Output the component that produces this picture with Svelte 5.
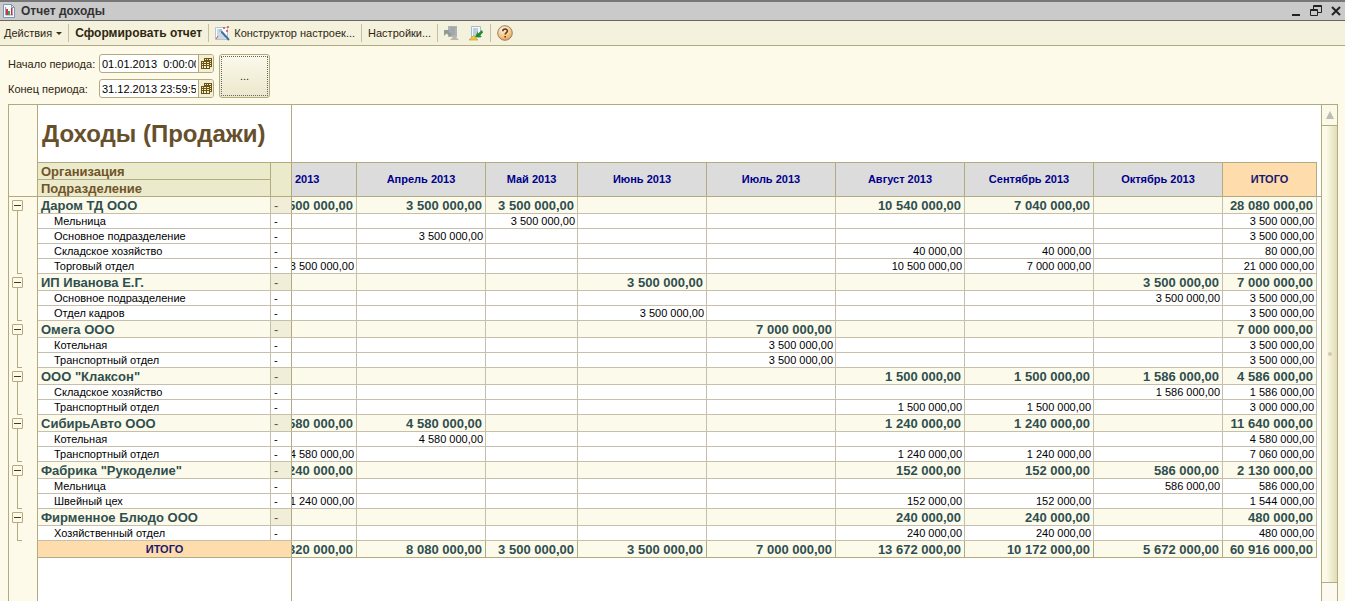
<script lang="ts">
    type Row = {
        name: string;
        values: Record<number, string>;
        total: string;
    };

    type Group = Row & { items: Row[] };

    const months = ['Март 2013', 'Апрель 2013', 'Май 2013', 'Июнь 2013', 'Июль 2013', 'Август 2013', 'Сентябрь 2013', 'Октябрь 2013'];

    const groups: Group[] = [
        {
            name: 'Даром ТД ООО',
            values: { 0: '3 500 000,00', 1: '3 500 000,00', 2: '3 500 000,00', 5: '10 540 000,00', 6: '7 040 000,00' },
            total: '28 080 000,00',
            items: [
                { name: 'Мельница', values: { 2: '3 500 000,00' }, total: '3 500 000,00' },
                { name: 'Основное подразделение', values: { 1: '3 500 000,00' }, total: '3 500 000,00' },
                { name: 'Складское хозяйство', values: { 5: '40 000,00', 6: '40 000,00' }, total: '80 000,00' },
                { name: 'Торговый отдел', values: { 0: '3 500 000,00', 5: '10 500 000,00', 6: '7 000 000,00' }, total: '21 000 000,00' }
            ]
        },
        {
            name: 'ИП Иванова Е.Г.',
            values: { 3: '3 500 000,00', 7: '3 500 000,00' },
            total: '7 000 000,00',
            items: [
                { name: 'Основное подразделение', values: { 7: '3 500 000,00' }, total: '3 500 000,00' },
                { name: 'Отдел кадров', values: { 3: '3 500 000,00' }, total: '3 500 000,00' }
            ]
        },
        {
            name: 'Омега ООО',
            values: { 4: '7 000 000,00' },
            total: '7 000 000,00',
            items: [
                { name: 'Котельная', values: { 4: '3 500 000,00' }, total: '3 500 000,00' },
                { name: 'Транспортный отдел', values: { 4: '3 500 000,00' }, total: '3 500 000,00' }
            ]
        },
        {
            name: 'ООО "Клаксон"',
            values: { 5: '1 500 000,00', 6: '1 500 000,00', 7: '1 586 000,00' },
            total: '4 586 000,00',
            items: [
                { name: 'Складское хозяйство', values: { 7: '1 586 000,00' }, total: '1 586 000,00' },
                { name: 'Транспортный отдел', values: { 5: '1 500 000,00', 6: '1 500 000,00' }, total: '3 000 000,00' }
            ]
        },
        {
            name: 'СибирьАвто ООО',
            values: { 0: '4 580 000,00', 1: '4 580 000,00', 5: '1 240 000,00', 6: '1 240 000,00' },
            total: '11 640 000,00',
            items: [
                { name: 'Котельная', values: { 1: '4 580 000,00' }, total: '4 580 000,00' },
                { name: 'Транспортный отдел', values: { 0: '4 580 000,00', 5: '1 240 000,00', 6: '1 240 000,00' }, total: '7 060 000,00' }
            ]
        },
        {
            name: 'Фабрика "Рукоделие"',
            values: { 0: '1 240 000,00', 5: '152 000,00', 6: '152 000,00', 7: '586 000,00' },
            total: '2 130 000,00',
            items: [
                { name: 'Мельница', values: { 7: '586 000,00' }, total: '586 000,00' },
                { name: 'Швейный цех', values: { 0: '1 240 000,00', 5: '152 000,00', 6: '152 000,00' }, total: '1 544 000,00' }
            ]
        },
        {
            name: 'Фирменное Блюдо ООО',
            values: { 5: '240 000,00', 6: '240 000,00' },
            total: '480 000,00',
            items: [
                { name: 'Хозяйственный отдел', values: { 5: '240 000,00', 6: '240 000,00' }, total: '480 000,00' }
            ]
        }
    ];

    const totals = ['9 320 000,00', '8 080 000,00', '3 500 000,00', '3 500 000,00', '7 000 000,00', '13 672 000,00', '10 172 000,00', '5 672 000,00'];

    let dateFrom = $state('01.01.2013  0:00:00');
    let dateTo = $state('31.12.2013 23:59:59');
    let closed: Record<string, boolean> = $state({});
</script>

{#snippet calendarIcon()}
    <svg width="11" height="12" viewBox="0 0 11 12" aria-hidden="true">
        <path d="M3 0h8v9H9v2H0V3h3z" fill="#6b5310" />
        <path d="M4 1h1v1H4zM6 1h1v1H6zM8 1h2v1H8zM1 4h1v1H1zM3 4h2v1H3zM6 4h2v1H6zM9 3h1v1H9zM1 6h1v1H1zM3 6h2v1H3zM6 6h2v1H6zM9 5h1v1H9zM1 8h1v2H1zM3 8h2v2H3zM6 8h2v2H6zM9 7h1v1H9z" fill="#f3efd5" />
    </svg>
{/snippet}

{#snippet cells(row: Row)}
    {#each months as _, i}
        <td class="num"><div><span>{row.values[i] ?? ''}</span></div></td>
    {/each}
    <td class="num"><div><span>{row.total}</span></div></td>
    <td class="rest"></td>
{/snippet}

<div class="window">
    <header class="titlebar">
        <svg width="12" height="14" viewBox="0 0 12 14" aria-hidden="true">
            <path d="M.5.5h8l3 3v10H.5z" fill="#f4f8fc" stroke="#7e98b4" />
            <path d="M8.5.5v3h3" fill="none" stroke="#7e98b4" />
            <path d="M2.5 3v8H10" fill="none" stroke="#8ea6bf" />
            <path d="M3 5h2v6H3z" fill="#d2363a" />
            <path d="M5 7h2v4H5z" fill="#3fa05a" />
            <path d="M8 4h1.500v7H8z" fill="#b63440" />
        </svg>
        <h1>Отчет доходы</h1>
        <div class="controls">
            <button aria-label="Свернуть">
                <svg width="10" height="12" viewBox="0 0 10 12"><path d="M1 9h8v2H1z" fill="#222" /></svg>
            </button>
            <button aria-label="Восстановить">
                <svg width="12" height="12" viewBox="0 0 12 12">
                    <path d="M3.500 4V.5h8v7H8M3 1.500h9M.5 4.500h7v6h-7zM0 5.500h8" fill="none" stroke="#222" />
                </svg>
            </button>
            <button aria-label="Закрыть">
                <svg width="10" height="12" viewBox="0 0 10 12"><path d="M1 2l8 8M9 2l-8 8" stroke="#222" stroke-width="2" /></svg>
            </button>
        </div>
    </header>

    <nav class="toolbar">
        <button>Действия <i class="caret"></i></button>
        <i class="sep"></i>
        <button class="primary">Сформировать отчет</button>
        <i class="sep"></i>
        <button>
            <svg width="15" height="15" viewBox="0 0 15 15" aria-hidden="true">
                <path d="M.5 1.500h12v12H.5z" fill="#fbfcfd" stroke="#b9c3ce" />
                <path d="M2 4h5M2 6h3M2 8h6M2 10h8M2 12h8" stroke="#9cb4c9" />
                <path d="M5 4l9 10" stroke="#416f9c" stroke-width="2" />
                <path d="M4.500 3.500l2 2" stroke="#8ecbe2" stroke-width="2" />
                <path d="M8 2h2M9 1v2M12 1h2M13 0v2M11 5h2M12 4v2M3 10l-2 3" stroke="#dc4747" />
            </svg>
            Конструктор настроек...
        </button>
        <i class="sep"></i>
        <button>Настройки...</button>
        <i class="sep"></i>
        <div class="icons">
            <button aria-label="Восстановить настройки">
                <svg width="16" height="15" viewBox="0 0 16 15">
                    <path d="M4 0h9v11H4z" fill="#adb2b5" />
                    <path d="M6 2h5M6 4h5M6 6h5M6 8h5" stroke="#989fa3" />
                    <path d="M0 4h6L4.500 5.500 8 8.500 6 10.500 2.500 7.500 0 10z" fill="#8f9c91" />
                    <path d="M6 14l4.500-4.500L15 14z" fill="#b9b7af" />
                </svg>
            </button>
            <button aria-label="Сохранить настройки">
                <svg width="16" height="15" viewBox="0 0 16 15">
                    <path d="M3.500.5h9v11h-9z" fill="#f3f8fc" stroke="#a8bccd" />
                    <path d="M5 3h5M5 5h5M5 7h4M5 9h3" stroke="#88a5bf" />
                    <path d="M14 4l-4 3.500V5L7 11h7l-2-1.500 3-3z" fill="#278a2b" />
                    <path d="M1 14l4.500-4.500L10 14z" fill="#f0c63d" stroke="#c39625" stroke-width=".6" />
                </svg>
            </button>
        </div>
        <i class="sep"></i>
        <button aria-label="Справка">
            <svg width="16" height="16" viewBox="0 0 16 16">
                <defs>
                    <radialGradient id="help" cx=".4" cy=".25" r=".8">
                        <stop offset="0" stop-color="#fff3dc" />
                        <stop offset=".6" stop-color="#f8c98a" />
                        <stop offset="1" stop-color="#e79a48" />
                    </radialGradient>
                </defs>
                <circle cx="8" cy="8" r="7.300" fill="url(#help)" stroke="#9a8064" />
                <path d="M5.800 6.300c0-3 4.600-2.900 4.600-.3 0 1.500-2.200 1.600-2.200 3.500M8.200 11v1.600" fill="none" stroke="#5d3c20" stroke-width="1.600" />
            </svg>
        </button>
    </nav>

    <form class="period" onsubmit={(e) => e.preventDefault()}>
        <div class="fields">
            <label for="from">Начало периода:</label>
            <div class="date">
                <input id="from" type="text" bind:value={dateFrom} />
                <button type="button" aria-label="Выбрать начало периода">{@render calendarIcon()}</button>
            </div>
            <label for="to">Конец периода:</label>
            <div class="date">
                <input id="to" type="text" bind:value={dateTo} />
                <button type="button" aria-label="Выбрать конец периода">{@render calendarIcon()}</button>
            </div>
        </div>
        <button type="button" class="pick"><span>...</span></button>
    </form>

    <main class="report">
        <div class="sheet">
            <table>
                <colgroup>
                    <col class="w-gutter" />
                    <col class="w-name" />
                    <col class="w-dash" />
                    <col class="w-cut" />
                    <col class="w-month" />
                    <col class="w-short" />
                    <col class="w-month" />
                    <col class="w-month" />
                    <col class="w-month" />
                    <col class="w-month" />
                    <col class="w-month" />
                    <col class="w-total" />
                    <col />
                </colgroup>
                <thead>
                    <tr class="caption">
                        <td class="gutter" rowspan="3"></td>
                        <th colspan="2">Доходы (Продажи)</th>
                        <td colspan="9" class="blank"></td>
                        <td class="rest" rowspan="3"></td>
                    </tr>
                    <tr class="head">
                        <th class="dim">Организация</th>
                        <th class="dim" rowspan="2"></th>
                        {#each months as month}
                            <th class="month" rowspan="2"><div><span>{month}</span></div></th>
                        {/each}
                        <th class="month sum" rowspan="2">ИТОГО</th>
                    </tr>
                    <tr class="head">
                        <th class="dim">Подразделение</th>
                    </tr>
                </thead>
                <tbody>
                    {#each groups as group}
                        <tr class="group">
                            <td class="gutter">
                                <button
                                    class="toggle"
                                    aria-label={group.name}
                                    aria-expanded={!closed[group.name]}
                                    onclick={() => (closed[group.name] = !closed[group.name])}
                                ></button>
                            </td>
                            <th class="name">{group.name}</th>
                            <td class="dash">-</td>
                            {@render cells(group)}
                        </tr>
                        {#if !closed[group.name]}
                            {#each group.items as item}
                                <tr class="item">
                                    <td class="gutter"></td>
                                    <th class="name">{item.name}</th>
                                    <td class="dash">-</td>
                                    {@render cells(item)}
                                </tr>
                            {/each}
                        {/if}
                    {/each}
                    <tr class="group total">
                        <td class="gutter"></td>
                        <th class="sum" colspan="2">ИТОГО</th>
                        {#each totals as value}
                            <td class="num"><div><span>{value}</span></div></td>
                        {/each}
                        <td class="num"><div><span>60 916 000,00</span></div></td>
                        <td class="rest"></td>
                    </tr>
                    <tr class="filler">
                        <td class="gutter"></td>
                        <td colspan="2"></td>
                        <td colspan="10" class="rest"></td>
                    </tr>
                </tbody>
            </table>
        </div>
        <div class="scrollbar">
            <button aria-label="Вверх">
                <svg width="8" height="8" viewBox="0 0 8 8"><path d="M4 0l4 8H0z" fill="#bdbdb0" /></svg>
            </button>
            <div class="thumb"><i></i></div>
        </div>
    </main>
</div>

<style>
    :global(body) {
        margin: 0;
        background: #fdfaea;
    }

    .window {
        --line: #b3ab80;
        --thin: #c6bfab;
        display: flex;
        flex-direction: column;
        height: 100vh;
        overflow: hidden;
        color: #2f2710;
        font: 11px/14px "Liberation Sans", Arial, sans-serif;
    }

    button {
        display: flex;
        align-items: center;
        padding: 0;
        border: 0;
        background: none;
        color: inherit;
        font: inherit;
    }

    svg {
        flex: none;
    }

    .titlebar {
        display: flex;
        align-items: center;
        gap: 6px;
        flex: none;
        box-sizing: border-box;
        height: 21px;
        padding: 0 4px 0 3px;
        border-top: 2px solid #777;
        border-bottom: 1px solid #666;
        background: #cacaca;
    }

    h1 {
        flex: 1;
        margin: 0;
        font-size: 12px;
        color: #333;
    }

    .controls {
        display: flex;
        gap: 9px;
    }

    .toolbar {
        display: flex;
        align-items: center;
        gap: 6px;
        flex: none;
        box-sizing: border-box;
        height: 25px;
        padding: 0 4px;
        border-bottom: 1px solid var(--line);
        background: #f4f1dc;
    }

    .toolbar button {
        gap: 4px;
        white-space: nowrap;
    }

    .icons {
        display: flex;
        gap: 8px;
    }

    .toolbar .primary {
        font-size: 12px;
        font-weight: bold;
    }

    .caret {
        border: 3px solid transparent;
        border-top-color: #3c3010;
        border-bottom: 0;
    }

    .sep {
        width: 1px;
        height: 18px;
        background: #c5c0a4;
    }

    .period {
        display: flex;
        gap: 5px;
        flex: none;
        padding: 8px 8px 6px;
    }

    .fields {
        display: grid;
        grid-template-columns: 86px 115px;
        gap: 6px 5px;
        align-items: center;
    }

    label {
        white-space: nowrap;
    }

    .date {
        display: flex;
        box-sizing: border-box;
        height: 19px;
        border: 1px solid var(--line);
        border-radius: 3px;
        overflow: hidden;
        background: #fff;
    }

    .date input {
        flex: 1;
        min-width: 0;
        margin-right: 2px;
        padding: 0 0 0 2px;
        border: 0;
        outline: 0;
        background: none;
        color: #000;
        font: 11px "Liberation Sans", Arial, sans-serif;
    }

    .date button {
        justify-content: center;
        width: 15px;
        border-left: 1px solid var(--line);
        background: #f3efd5;
    }

    .pick {
        box-sizing: border-box;
        width: 51px;
        height: 44px;
        padding: 1px;
        border: 1px solid var(--line);
        border-radius: 3px;
        background: linear-gradient(#fbf9ea, #ebe8cd);
    }

    .pick span {
        display: grid;
        place-items: center;
        flex: 1;
        align-self: stretch;
        border: 1px dotted #666;
    }

    .report {
        display: flex;
        flex: 1;
        min-height: 0;
        margin: 0 7px 0 8px;
        border: 1px solid var(--line);
        border-bottom: 0;
        background: #fff;
    }

    .sheet {
        display: grid;
        flex: 1;
        min-width: 0;
        overflow: hidden;
    }

    table {
        table-layout: fixed;
        width: 100%;
        border-spacing: 0;
    }

    .w-gutter { width: 29px; }
    .w-name { width: 233px; }
    .w-dash { width: 21px; }
    .w-cut { width: 65px; }
    .w-month { width: 129px; }
    .w-short { width: 92px; }
    .w-total { width: 94px; }

    th,
    td {
        box-sizing: border-box;
        padding: 0;
        border: 0 solid var(--line);
        border-right-width: 1px;
        border-bottom-width: 1px;
        white-space: nowrap;
    }

    .gutter {
        background: #fdfaea;
    }

    tbody .gutter {
        border-bottom: 0;
        vertical-align: top;
    }

    .rest {
        border-right: 0;
    }

    tbody .rest {
        border-bottom: 0;
    }

    .caption {
        height: 58px;
    }

    .caption th {
        padding-left: 4px;
        color: #66502c;
        font-size: 24px;
        line-height: 28px;
        text-align: left;
    }

    .blank {
        border-right: 0;
    }

    .head {
        height: 17px;
    }

    .dim {
        padding: 2px 0 0 3px;
        background: #ebebcb;
        color: #70542a;
        font-size: 13px;
        text-align: left;
    }

    .month {
        padding-bottom: 2px;
        background: #dcdcdc;
        color: #00008b;
        font-size: 11px;
    }

    .sum,
    .month.sum {
        background: #ffdcac;
        color: #191970;
        font-size: 11px;
    }

    .num div,
    .month div {
        display: flex;
        justify-content: flex-end;
        overflow: hidden;
    }

    .month div span {
        flex: none;
        width: 128px;
        text-align: center;
    }

    .month:nth-child(5) span {
        width: 91px;
    }

    .num span {
        flex: none;
        padding-right: 2px;
    }

    .group {
        height: 17px;
        color: #2f4f4f;
        font-size: 13px;
        font-weight: bold;
    }

    .group th,
    .group td {
        border-bottom-color: var(--thin);
    }

    .group .name,
    .group .num {
        padding-top: 2px;
        border-right-color: var(--thin);
        background: #fcfaeb;
    }

    .group .num span {
        padding-right: 3px;
    }

    .name {
        padding-left: 3px;
        text-align: left;
    }

    .dash {
        padding-left: 3px;
    }

    .group .dash {
        padding-top: 2px;
        background: #f0eed8;
        color: #70542a;
        font-weight: normal;
    }

    .item {
        height: 15px;
        color: #000;
    }

    .item th,
    .item td {
        border-color: var(--thin);
        font-weight: normal;
    }

    .item .gutter,
    .item .dash {
        border-right-color: var(--line);
    }

    .item .name {
        padding-left: 16px;
    }

    .total th,
    .total td,
    .total .num {
        border-color: var(--line);
    }

    .toggle {
        justify-content: center;
        box-sizing: border-box;
        width: 11px;
        height: 11px;
        margin: 3px 0 0 3px;
        border: 1px solid var(--line);
        border-radius: 1px;
    }

    .toggle::before {
        content: '';
        width: 7px;
        height: 1px;
        background: #4b3a10;
    }

    .group .gutter {
        background: linear-gradient(var(--line), var(--line)) 8px 14px / 1px 3px no-repeat #fdfaea;
    }

    .total .gutter {
        background: #fdfaea;
    }

    .item .gutter {
        background: linear-gradient(var(--line), var(--line)) 8px 0 / 1px 100% no-repeat #fdfaea;
    }

    .item:has(+ .group) .gutter {
        background:
            linear-gradient(var(--line), var(--line)) 8px 0 / 1px 100% no-repeat,
            linear-gradient(var(--line), var(--line)) 8px 100% / 5px 1px no-repeat,
            #fdfaea;
    }

    .filler td {
        border-bottom: 0;
    }

    .scrollbar {
        display: flex;
        flex-direction: column;
        flex: none;
        width: 15px;
        padding-bottom: 18px;
        border-left: 1px solid var(--line);
        background: #fbf9f0;
    }

    .scrollbar button {
        justify-content: center;
        height: 20px;
        background: #fbf9e8;
    }

    .thumb {
        display: grid;
        place-items: center;
        flex: 1;
        border: 1px solid var(--line);
        border-width: 1px 0;
        background: linear-gradient(90deg, #fbf9e8 30%, #e2dcb4);
    }

    .thumb i {
        width: 4px;
        height: 4px;
        border-radius: 2px;
        background: #d0cab0;
    }
</style>
